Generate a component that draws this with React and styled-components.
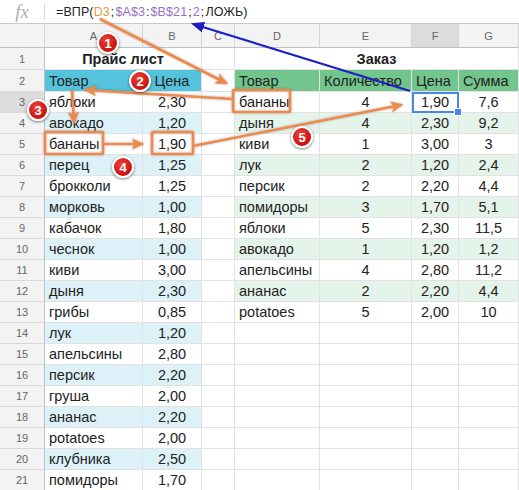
import React from 'react';
import styled, { createGlobalStyle } from 'styled-components';

const GlobalStyle = createGlobalStyle`
  html, body { margin: 0; padding: 0; background: #fff; }
  body { font-family: "Liberation Sans", Arial, sans-serif; }
`;

const priceList = [
  ['яблоки', '2,30'], ['авокадо', '1,20'], ['бананы', '1,90'], ['перец', '1,25'],
  ['брокколи', '1,25'], ['морковь', '1,00'], ['кабачок', '1,80'], ['чеснок', '1,00'],
  ['киви', '3,00'], ['дыня', '2,30'], ['грибы', '0,85'], ['лук', '1,20'],
  ['апельсины', '2,80'], ['персик', '2,20'], ['груша', '2,00'], ['ананас', '2,20'],
  ['potatoes', '2,00'], ['клубника', '2,50'], ['помидоры', '1,70'],
];

const orders = [
  ['бананы', '4', '1,90', '7,6'], ['дыня', '4', '2,30', '9,2'], ['киви', '1', '3,00', '3'],
  ['лук', '2', '1,20', '2,4'], ['персик', '2', '2,20', '4,4'], ['помидоры', '3', '1,70', '5,1'],
  ['яблоки', '5', '2,30', '11,5'], ['авокадо', '1', '1,20', '1,2'], ['апельсины', '4', '2,80', '11,2'],
  ['ананас', '2', '2,20', '4,4'], ['potatoes', '5', '2,00', '10'],
];

const CYAN = '#55c3dc';
const CYAN_LIGHT = '#ddf2f8';
const GREEN = '#72c58d';
const GREEN_LIGHT = '#e5f4ea';

const Page = styled.div`
  position: relative;
  width: 519px;
  height: 490px;
  overflow: hidden;
  background: #fff;
`;

const FormulaBar = styled.div`
  display: flex;
  height: 24px;
  box-sizing: border-box;
  border-bottom: 1px solid #c8c8c8;
`;

const Fx = styled.div`
  width: 45px;
  display: flex;
  align-items: center;
  justify-content: center;
  font-family: "Liberation Serif", serif;
  font-style: italic;
  font-size: 19px;
  color: #b0b0b0;
  border-right: 1px solid #dcdcdc;
  box-sizing: border-box;
  margin: 3px 0;
`;

const Formula = styled.div`
  display: flex;
  align-items: center;
  padding-left: 11px;
  font-size: 12.5px;
  letter-spacing: 0.1px;
  color: #222;
`;

const Tok = styled.span`
  color: ${p => p.$c || '#222'};
  margin: 0 ${p => p.$gap || 0}px;
`;

const Sheet = styled.div`
  display: grid;
  grid-template-columns: 45px 98px 59px 33px 85px 92px 47px 60px;
  grid-template-rows: 24px 22px 22px repeat(19, 21px);
  font-size: 14.5px;
  color: #222;
`;

const ColHead = styled.div`
  background: ${p => (p.$active ? '#dcdcdc' : '#f3f3f3')};
  color: #666;
  font-size: 11px;
  display: flex;
  align-items: center;
  justify-content: center;
  border-right: 1px solid #d4d4d4;
  border-bottom: 1px solid #c0c0c0;
  box-sizing: border-box;
`;

const RowNum = styled.div`
  background: ${p => (p.$active ? '#dcdcdc' : '#f3f3f3')};
  color: #666;
  font-size: 11px;
  display: flex;
  align-items: center;
  justify-content: center;
  border-right: 1px solid #c0c0c0;
  border-bottom: 1px solid #d8d8d8;
  box-sizing: border-box;
`;

const Cell = styled.div`
  position: relative;
  grid-column: ${p => (p.$span ? `span ${p.$span}` : 'auto')};
  background: ${p => p.$bg || '#fff'};
  font-weight: ${p => (p.$bold ? 700 : 400)};
  display: flex;
  align-items: center;
  justify-content: ${p => (p.$align === 'center' ? 'center' : 'flex-start')};
  padding: 0 4px;
  white-space: nowrap;
  border-right: 1px solid #e2e2e2;
  border-bottom: 1px solid #e2e2e2;
  box-sizing: border-box;
  ${p => p.$selected && `
    outline: 2px solid #4a86e8;
    outline-offset: -2px;
    z-index: 2;
  `}
`;

const Handle = styled.span`
  position: absolute;
  right: -4px;
  bottom: -4px;
  width: 6px;
  height: 6px;
  background: #4a86e8;
  border: 1px solid #fff;
`;

const Overlay = styled.svg`
  position: absolute;
  left: 0;
  top: 0;
  pointer-events: none;
  z-index: 5;
`;

const Badge = styled.div`
  position: absolute;
  left: ${p => p.$x - 11}px;
  top: ${p => p.$y - 11}px;
  width: 18px;
  height: 18px;
  border-radius: 50%;
  border: 2px solid #fff;
  background: radial-gradient(circle at 40% 35%, #f0403a, #c8120e 70%);
  box-shadow: 0 1px 3px rgba(0, 0, 0, 0.55);
  color: #fff;
  font-weight: 700;
  font-size: 13px;
  display: flex;
  align-items: center;
  justify-content: center;
  z-index: 6;
`;

const cols = ['A', 'B', 'C', 'D', 'E', 'F', 'G'];

function leftCells(r) {
  const i = r - 3;
  const even = r % 2 === 0;
  if (r === 1) return [<Cell key="ab" $span={2} $bold $align="center">Прайс лист</Cell>];
  if (r === 2) return [
    <Cell key="a" $bg={CYAN}>Товар</Cell>,
    <Cell key="b" $bg={CYAN} $align="center">Цена</Cell>,
  ];
  const bg = even ? CYAN_LIGHT : '#fff';
  return [
    <Cell key="a" $bg={bg}>{priceList[i][0]}</Cell>,
    <Cell key="b" $bg={bg} $align="center">{priceList[i][1]}</Cell>,
  ];
}

function rightCells(r) {
  if (r === 1) return [<Cell key="dg" $span={4} $bold $align="center">Заказ</Cell>];
  if (r === 2) return ['Товар', 'Количество', 'Цена', 'Сумма'].map(t => (
    <Cell key={t} $bg={GREEN}>{t}</Cell>
  ));
  const row = orders[r - 3];
  if (!row) return [0, 1, 2, 3].map(k => <Cell key={k} />);
  const bg = r % 2 === 0 ? GREEN_LIGHT : '#fff';
  return row.map((v, k) => (
    <Cell key={k} $bg={bg} $align={k === 0 ? 'left' : 'center'} $selected={r === 3 && k === 2}>
      {v}
      {r === 3 && k === 2 && <Handle />}
    </Cell>
  ));
}

const ORANGE = '#ec8a4e';

const Arrows = () => (
  <Overlay width="519" height="490">
    <defs>
      <marker id="ho" markerWidth="5" markerHeight="4.4" refX="4" refY="2.2" orient="auto" markerUnits="strokeWidth">
        <path d="M0,0 L5,2.2 L0,4.4 L1.2,2.2 z" fill={ORANGE} />
      </marker>
      <marker id="hb" markerWidth="6" markerHeight="5" refX="5" refY="2.5" orient="auto" markerUnits="strokeWidth">
        <path d="M0,0 L6,2.5 L0,5 z" fill="#1c1fc4" />
      </marker>
      <filter id="sh" x="-10%" y="-10%" width="120%" height="120%">
        <feDropShadow dx="0" dy="0" stdDeviation="1" floodColor="#000" floodOpacity="0.35" />
      </filter>
    </defs>
    <g filter="url(#sh)" stroke={ORANGE} strokeWidth="2.6" fill="none">
      <line x1="100" y1="19" x2="226" y2="83" markerEnd="url(#ho)" />
      <line x1="233" y1="99" x2="86" y2="90" markerEnd="url(#ho)" />
      <line x1="72" y1="90" x2="74" y2="122" markerEnd="url(#ho)" />
      <line x1="103" y1="144" x2="142" y2="144" markerEnd="url(#ho)" />
      <line x1="193" y1="146" x2="401" y2="105" markerEnd="url(#ho)" />
      <rect x="45" y="132" width="58" height="22" rx="1" />
      <rect x="152" y="132" width="41" height="22" rx="1" />
      <rect x="233" y="90" width="57" height="22" rx="1" />
    </g>
    <line x1="410" y1="91" x2="193" y2="24" stroke="#1c1fc4" strokeWidth="2.2" markerEnd="url(#hb)" />
  </Overlay>
);

export default function App() {
  const rows = [];
  for (let r = 1; r <= 21; r++) {
    rows.push(
      <React.Fragment key={r}>
        <RowNum $active={r === 3}>{r}</RowNum>
        {leftCells(r)}
        <Cell />
        {rightCells(r)}
      </React.Fragment>
    );
  }
  return (
    <>
      <GlobalStyle />
      <Page>
        <FormulaBar>
          <Fx>fx</Fx>
          <Formula>
            <Tok>=ВПР(</Tok>
            <Tok $c="#e0a040">D3</Tok>
            <Tok $gap={1}>;</Tok>
            <Tok $c="#9a6fc8">$A$3</Tok>
            <Tok $gap={1}>:</Tok>
            <Tok $c="#9a6fc8">$B$21</Tok>
            <Tok $gap={1}>;</Tok>
            <Tok $c="#9a6fc8">2</Tok>
            <Tok $gap={1}>;</Tok>
            <Tok>ЛОЖЬ)</Tok>
          </Formula>
        </FormulaBar>
        <Sheet>
          <ColHead />
          {cols.map(c => <ColHead key={c} $active={c === 'F'}>{c}</ColHead>)}
          {rows}
        </Sheet>
        <Arrows />
        <Badge $x={108} $y={43}>1</Badge>
        <Badge $x={140} $y={81}>2</Badge>
        <Badge $x={38} $y={110}>3</Badge>
        <Badge $x={123} $y={167}>4</Badge>
        <Badge $x={302} $y={137}>5</Badge>
      </Page>
    </>
  );
}
